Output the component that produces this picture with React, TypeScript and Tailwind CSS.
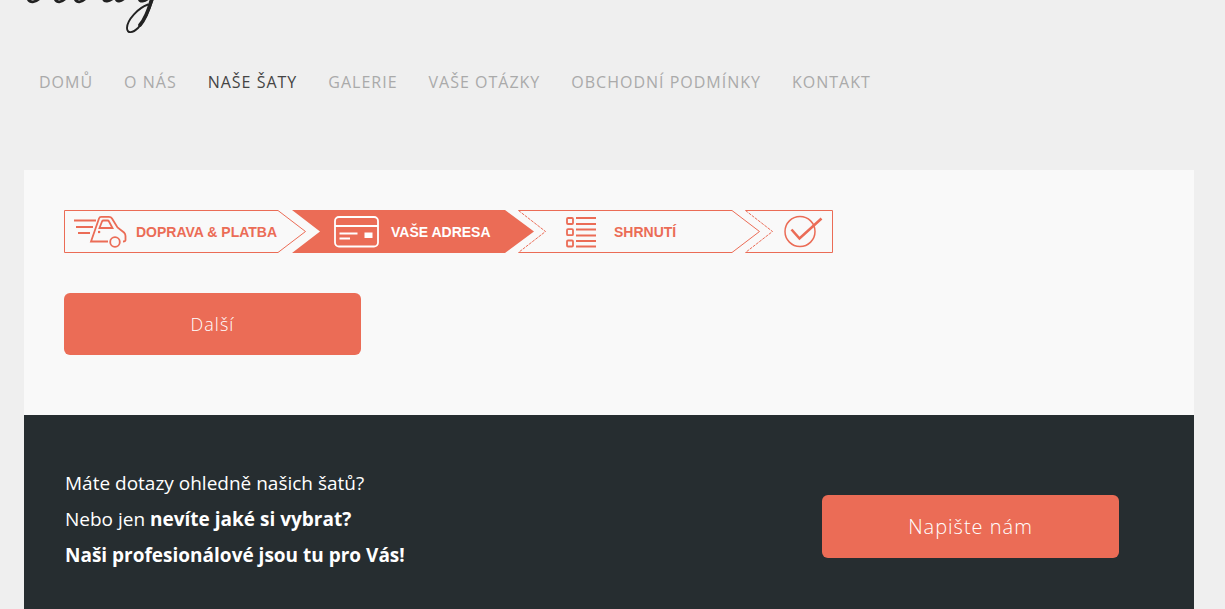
import type { ReactNode } from "react";

type NavItem = { label: string; href: string; active?: boolean };

const NAV: NavItem[] = [
  { label: "Domů", href: "#domu" },
  { label: "O nás", href: "#o-nas" },
  { label: "Naše šaty", href: "#nase-saty", active: true },
  { label: "Galerie", href: "#galerie" },
  { label: "Vaše otázky", href: "#vase-otazky" },
  { label: "Obchodní podmínky", href: "#obchodni-podminky" },
  { label: "Kontakt", href: "#kontakt" },
];

function Logo() {
  return (
    <svg width="160" height="40" viewBox="0 0 160 40" fill="none" stroke="#222" strokeLinecap="round" aria-hidden="true">
      <path d="M28 -1C30 3 35 3 40 -2M55 -1C57 3 61 3 66 -2M75 -1C77 3 81 3 86 -2" strokeWidth="2.800" />
      <path d="M103 -2C104 3 109 2 115 -3M116 -2C116 3 121 2 126 -3M139 -2C139 3 145 2 150 -3" strokeWidth="2.600" />
      <path d="M148 4.500C138 8 127 20 127 28C127 34 133 33 138 28C145 21 149 11 153 -1" strokeWidth="1.900" />
      <path d="M140 25C146 18 149 9 152 -2" strokeWidth="3.600" />
    </svg>
  );
}

function VanIcon() {
  return (
    <svg width="54" height="33" viewBox="0 0 54 33" fill="none" stroke="currentColor" strokeWidth="1.800" aria-hidden="true">
      <path d="M0 5.500H22M2 12H19M4 18H16" />
      <path d="M34 26.500H17L25 3.500Q25.600 1.800 27 1.800H35Q37 1.800 38 3.500L43.500 12.500L50 17.500Q51.500 19 51.500 21V25Q51.500 26.500 49 26.500" />
      <path d="M25.500 13L28 6.500Q28.500 5.500 29.500 5.500H33.500Q34.500 5.500 35 6.500L38.500 13Z" />
      <circle cx="41" cy="27" r="4.800" />
      <path d="M24 17H26.200" strokeWidth="2.200" />
    </svg>
  );
}

function CardIcon() {
  return (
    <svg width="46" height="32" viewBox="0 0 46 32" fill="none" stroke="currentColor" strokeWidth="1.800" aria-hidden="true">
      <rect x="1" y="1" width="43" height="29.500" rx="4" />
      <path d="M1 10H44M5.500 17.500H23.500M5.500 22.500H16" />
      <rect x="30.500" y="16.500" width="8" height="5.500" fill="currentColor" stroke="none" />
    </svg>
  );
}

function ListIcon() {
  return (
    <svg width="30" height="32" viewBox="0 0 30 32" fill="none" stroke="currentColor" strokeWidth="1.800" aria-hidden="true">
      <rect x="1" y="2" width="6" height="6" rx="1" />
      <rect x="1" y="13.200" width="6" height="6" rx="1" />
      <rect x="1" y="24.500" width="6" height="6" rx="1" />
      <path d="M10 2H30M10 8H30M10 13.500H30M10 19.500H30M10 25H30M10 30.500H30" />
    </svg>
  );
}

function CheckIcon() {
  return (
    <svg width="40" height="33" viewBox="0 0 40 33" fill="none" stroke="currentColor" role="img" aria-label="Hotovo">
      <circle cx="16" cy="16.500" r="15" strokeWidth="1.500" />
      <path d="M7.500 14.500L15.500 23.500L37.500 3.500" strokeWidth="2.600" />
    </svg>
  );
}

function Step({ shape, className, children }: { shape: ReactNode; className: string; children: ReactNode }) {
  return (
    <li className={`relative flex h-[43px] shrink-0 items-center ${className}`}>
      <svg className="absolute inset-0 h-full w-full" fill="none" stroke="#eb6c56" aria-hidden="true">
        {shape}
      </svg>
      <span className="relative flex items-center">{children}</span>
    </li>
  );
}

function Steps() {
  return (
    <ol className="flex font-['Liberation_Sans',sans-serif] text-sm font-bold text-[#eb6c56]">
      <Step className="w-[242px] pl-2.5" shape={<path d="M.5 .5H214L241.500 21.500L214 42.500H.5Z" />}>
        <VanIcon />
        <span className="ml-2">DOPRAVA &amp; PLATBA</span>
      </Step>
      <Step
        className="-ml-[15px] w-[243px] pl-[43px] text-white"
        shape={<path d="M1 0H214L243 21.500L214 43H1L29 21.500Z" fill="#eb6c56" stroke="none" />}
      >
        <CardIcon />
        <span className="ml-[11px]">VAŠE ADRESA</span>
      </Step>
      <Step
        className="-ml-4 w-[242px] pl-12"
        shape={
          <>
            <path d="M.5 .5H214L241.500 21.500L214 42.500H.5" />
            <path d="M.5 .5L27.500 21.500L.5 42.500" strokeDasharray="3 1" />
          </>
        }
      >
        <ListIcon />
        <span className="ml-[18px]">SHRNUTÍ</span>
      </Step>
      <Step
        className="-ml-[15px] w-[88px] pl-[39px]"
        shape={
          <>
            <path d="M.5 .5H87.500V42.500H.5" />
            <path d="M.5 .5L27.500 21.500L.5 42.500" strokeDasharray="3 1" />
          </>
        }
      >
        <CheckIcon />
      </Step>
    </ol>
  );
}

export default function App() {
  return (
    <div className="min-h-screen bg-[#efefef] pr-[31px] pl-6 font-['Open_Sans',sans-serif]">
      <header className="h-[170px]">
        <a href="#domu" className="-ml-6 block w-40" aria-label="Úvod">
          <Logo />
        </a>
        <nav className="mt-[30px] ml-[15px] flex gap-[31px] text-base tracking-[1px] text-[#aaa] uppercase">
          {NAV.map((item) => (
            <a key={item.href} href={item.href} className={item.active ? "text-[#444]" : ""}>
              {item.label}
            </a>
          ))}
        </nav>
      </header>

      <main className="bg-[#f9f9f9] px-10 pt-10 pb-[60px]">
        <Steps />
        <button
          type="button"
          className="mt-10 h-[62px] w-[297px] rounded-md bg-[#eb6c56] text-lg font-light tracking-[1px] text-white"
        >
          Další
        </button>
      </main>

      <section className="flex items-start justify-between bg-[#262d30] pt-[50px] pr-[75px] pb-10 pl-[41px] text-white">
        <p className="text-[19px] leading-9">
          Máte dotazy ohledně našich šatů?
          <br />
          Nebo jen <strong>nevíte jaké si vybrat?</strong>
          <br />
          <strong>Naši profesionálové jsou tu pro Vás!</strong>
        </p>
        <button
          type="button"
          className="mt-[30px] h-[63px] w-[297px] rounded-md bg-[#eb6c56] text-xl font-light tracking-[1px] text-white"
        >
          Napište nám
        </button>
      </section>
    </div>
  );
}
